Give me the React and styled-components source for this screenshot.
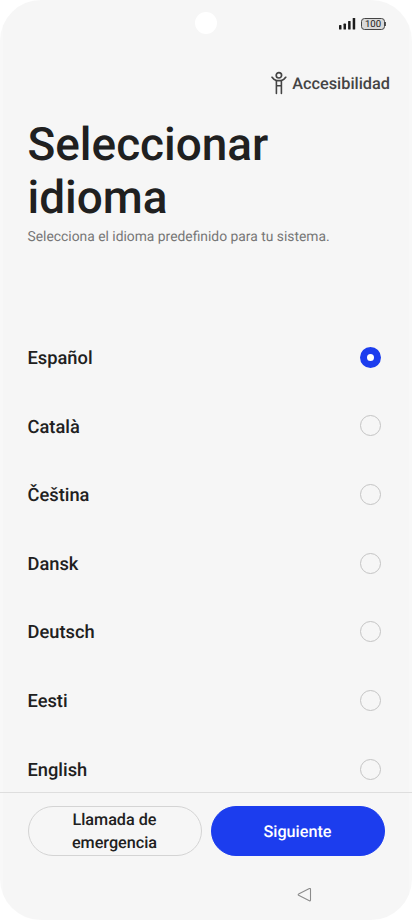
import React, { useState } from "react";
import styled, { createGlobalStyle } from "styled-components";

const languages = [
  "Español",
  "Català",
  "Čeština",
  "Dansk",
  "Deutsch",
  "Eesti",
  "English"
];

const SignalIcon = () => (
  <svg width="17" height="12" viewBox="0 0 17 12" fill="#1c1c1c">
    <rect x="0" y="7.1" width="2.5" height="4.4" rx="0.6" />
    <rect x="4.5" y="5.6" width="2.5" height="5.9" rx="0.6" />
    <rect x="9.1" y="3" width="2.5" height="8.5" rx="0.6" />
    <rect x="13.7" y="0" width="2.5" height="11.5" rx="0.6" />
  </svg>
);

const PersonIcon = () => (
  <svg
    width="16"
    height="24"
    viewBox="0 0 16 24"
    fill="none"
    stroke="#444"
    strokeWidth="1.7"
    strokeLinecap="round"
    strokeLinejoin="round"
  >
    <circle cx="7.9" cy="4.3" r="2.7" />
    <path d="M1.1 6.3C2.4 8.3 4 9.2 5.6 9.6H10.2C11.8 9.2 13.4 8.3 14.7 6.3" />
    <path d="M5.4 9.8V22.4M10.4 9.8V22.4M5.4 14.8H10.4" strokeWidth="1.6" />
  </svg>
);

const BackIcon = () => (
  <svg width="16" height="16" viewBox="0 0 16 16" fill="none" stroke="#8b8b8b" strokeWidth="1.1">
    <path
      d="M1.6 7.1L12.4 1.6Q13.5 1.1 13.5 2.3V13.1Q13.5 14.2 12.4 13.7L1.6 8.3Q0.7 7.7 1.6 7.1Z"
      strokeLinejoin="round"
    />
  </svg>
);

export default () => {
  const [selected, setSelected] = useState("Español");

  return (
    <Screen>
      <GlobalStyle />
      <StatusBar>
        <Camera />
        <SignalIcon />
        <Battery>100</Battery>
      </StatusBar>
      <Accessibility>
        <PersonIcon />
        Accesibilidad
      </Accessibility>
      <Header>
        <Title>Seleccionar idioma</Title>
        <Subtitle>Selecciona el idioma predefinido para tu sistema.</Subtitle>
      </Header>
      <LanguageList>
        {languages.map(name => (
          <LanguageRow key={name} onClick={() => setSelected(name)}>
            <LanguageName>{name}</LanguageName>
            <Radio $checked={selected === name} />
          </LanguageRow>
        ))}
      </LanguageList>
      <Footer>
        <Button>Llamada de emergencia</Button>
        <Button $primary>Siguiente</Button>
      </Footer>
      <NavBar>
        <BackIcon />
      </NavBar>
    </Screen>
  );
};

const GlobalStyle = createGlobalStyle`
  * {
    box-sizing: border-box;
  }
  body {
    margin: 0;
    background: #fff;
    font-family: Roboto, sans-serif;
    text-rendering: geometricPrecision;
  }
`;

const Screen = styled("main")`
  display: flex;
  flex-direction: column;
  width: 412px;
  height: 920px;
  overflow: hidden;
  border-radius: 41px;
  color: #202020;
  background: linear-gradient(
    90deg,
    #f8f8f8 3px,
    #f6f6f6 3px,
    #f6f6f6 409px,
    #f8f8f8 409px
  );
`;

const StatusBar = styled("div")`
  position: relative;
  display: flex;
  flex: none;
  align-items: center;
  justify-content: flex-end;
  gap: 5px;
  height: 48px;
  padding-right: 27px;
`;

const Camera = styled("div")`
  position: absolute;
  left: 195px;
  top: 12px;
  width: 22px;
  height: 22px;
  border-radius: 50%;
  background: #fff;
`;

const Battery = styled("div")`
  position: relative;
  width: 24px;
  height: 12px;
  border: 1px solid #444;
  border-radius: 3.5px;
  background: #d9d9d9;
  font-size: 9.6px;
  font-weight: 400;
  line-height: 11px;
  text-align: center;
  &::after {
    content: "";
    position: absolute;
    right: -2px;
    top: 3px;
    width: 1px;
    height: 4px;
    background: #555;
  }
`;

const Accessibility = styled("div")`
  display: flex;
  flex: none;
  align-items: center;
  justify-content: flex-end;
  gap: 5px;
  height: 24px;
  margin-top: 23px;
  padding-right: 22px;
  color: #444;
  font-size: 16.3px;
  font-weight: 500;
`;

const Header = styled("header")`
  flex: none;
  height: 228px;
  padding: 24px 27.5px 0;
`;

const Title = styled("h1")`
  width: 300px;
  margin: 0;
  font-size: 45.9px;
  font-weight: 500;
  line-height: 53px;
`;

const Subtitle = styled("p")`
  margin: 3px 0 0;
  color: #777;
  font-size: 13.85px;
  line-height: 18px;
`;

const LanguageList = styled("div")`
  flex: none;
  height: 469px;
  overflow: hidden;
`;

const LanguageRow = styled("div")`
  display: flex;
  align-items: center;
  justify-content: space-between;
  height: 68.65px;
  padding: 0 31px 0 27.5px;
  font-size: 18.3px;
  font-weight: 500;
  cursor: pointer;
`;

const LanguageName = styled("span")`
  padding-top: 2.2px;
`;

const Radio = styled("span")`
  width: 21px;
  height: 21px;
  border: ${({ $checked }) => ($checked ? "7px solid #1c3dee" : "1px solid #c4c4c4")};
  border-radius: 50%;
  background: ${({ $checked }) => ($checked ? "#fff" : "transparent")};
`;

const Footer = styled("footer")`
  display: grid;
  flex: none;
  grid-template-columns: 174px 174px;
  gap: 9px;
  height: 77px;
  padding: 12.5px 27.5px;
  border-top: 1px solid #dedede;
`;

const Button = styled("button")`
  height: 50px;
  padding: 1px 36px 0;
  border: 1px solid ${({ $primary }) => ($primary ? "#1c3dee" : "#d4d4d4")};
  border-radius: 25px;
  background: ${({ $primary }) => ($primary ? "#1c3dee" : "transparent")};
  color: ${({ $primary }) => ($primary ? "#fff" : "#202020")};
  font: 500 16.2px/23px Roboto, sans-serif;
  text-rendering: geometricPrecision;
`;

const NavBar = styled("nav")`
  display: flex;
  flex: none;
  height: 51px;
  padding: 18px 0 0 297px;
`;
